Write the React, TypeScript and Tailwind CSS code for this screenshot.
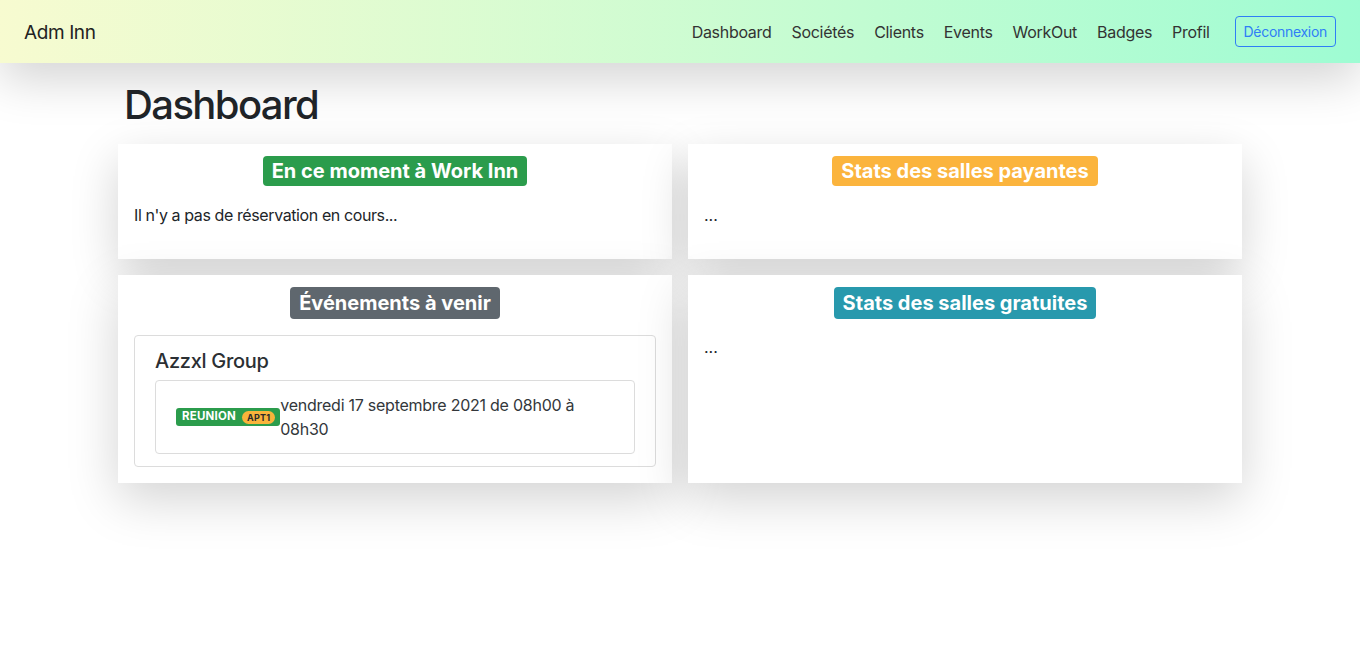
import React from "react";

const font = { fontFamily: "Inter, 'Noto Sans', sans-serif" };

function TitleBadge({ text, color, h }: { text: string; color: string; h: string }) {
  return (
    <div className="flex justify-center">
      <span
        className={`${color} ${h} inline-flex items-center px-[9px] rounded-[4px] text-white font-bold text-[20px] leading-none`}
      >
        {text}
      </span>
    </div>
  );
}

export default function App() {
  const links = ["Dashboard", "Sociétés", "Clients", "Events", "WorkOut", "Badges", "Profil"];
  return (
    <div style={font} className="min-h-[657px] bg-white text-[#212529]">
      <nav className="relative z-10 h-[63px] flex items-center justify-between pl-[24px] pr-[24px] bg-gradient-to-r from-[#f7fbd0] to-[#9efcd3] shadow-[0_16px_48px_rgba(0,0,0,0.175)]">
        <div className="mt-[3px] text-[19px] tracking-[-0.4px] text-[#222]">Adm Inn</div>
        <div className="flex items-center">
          <div className="flex items-center gap-[20px] text-[16px] tracking-[-0.3px] text-[#333]">
            {links.map((l) => (
              <span key={l}>{l}</span>
            ))}
          </div>
          <button className="ml-[25px] h-[31px] px-[8px] border border-[#2f7ef6] rounded-[4px] text-[14px] tracking-[-0.3px] text-[#2f7ef6]">
            Déconnexion
          </button>
        </div>
      </nav>

      <main className="w-[1124px] mx-auto">
        <h1 className="mt-[18px] mb-[15px] pl-[6px] text-[40px] leading-[48px] font-medium tracking-[-1.6px] text-[#212529]">
          Dashboard
        </h1>
        <div className="grid grid-cols-2 gap-[16px]">
          <div className="bg-white shadow-[0_16px_48px_rgba(0,0,0,0.175)] pt-[12px] px-[16px] pb-[32px]">
            <TitleBadge text="En ce moment à Work Inn" color="bg-[#2b9c4c]" h="h-[30px]" />
            <p className="mt-[17px] text-[16px] leading-[24px] tracking-[-0.4px]">Il n'y a pas de réservation en cours...</p>
          </div>
          <div className="bg-white shadow-[0_16px_48px_rgba(0,0,0,0.175)] pt-[12px] px-[16px] pb-[32px]">
            <TitleBadge text="Stats des salles payantes" color="bg-[#fbb43d]" h="h-[30px]" />
            <p className="mt-[17px] text-[16px] leading-[24px]">...</p>
          </div>
          <div className="bg-white shadow-[0_16px_48px_rgba(0,0,0,0.175)] pt-[12px] px-[16px] pb-[16px]">
            <TitleBadge text="Événements à venir" color="bg-[#5f676e]" h="h-[32px]" />
            <div className="mt-[16px] border border-[#dcdcdc] rounded-[4px] pt-[13px] px-[20px] pb-[12px]">
              <div className="text-[20px] leading-[24px] font-medium tracking-[-0.3px] text-[#2b2f33] mb-[7px]">Azzxl Group</div>
              <div className="border border-[#dcdcdc] rounded-[4px] flex items-center py-[12px] pl-[20px] pr-[20px]">
                <span className="shrink-0 inline-flex items-center h-[18px] pl-[6px] pr-[5px] rounded-[3px] bg-[#2b9c4c] text-white text-[11.5px] font-bold tracking-[0.2px] leading-none">
                  REUNION
                  <span className="ml-[6px] inline-flex items-center h-[13px] px-[5px] rounded-full bg-[#f9b43b] text-[#2a2a2a] text-[9px] tracking-[0.2px] font-bold">
                    APT1
                  </span>
                </span>
                <span className="text-[16px] leading-[24px] tracking-[-0.25px] text-[#33373b]">
                  vendredi 17 septembre 2021 de 08h00 à 08h30
                </span>
              </div>
            </div>
          </div>
          <div className="bg-white shadow-[0_16px_48px_rgba(0,0,0,0.175)] pt-[12px] px-[16px] pb-[32px]">
            <TitleBadge text="Stats des salles gratuites" color="bg-[#2899ad]" h="h-[32px]" />
            <p className="mt-[16px] text-[16px] leading-[24px]">...</p>
          </div>
        </div>
      </main>
    </div>
  );
}
